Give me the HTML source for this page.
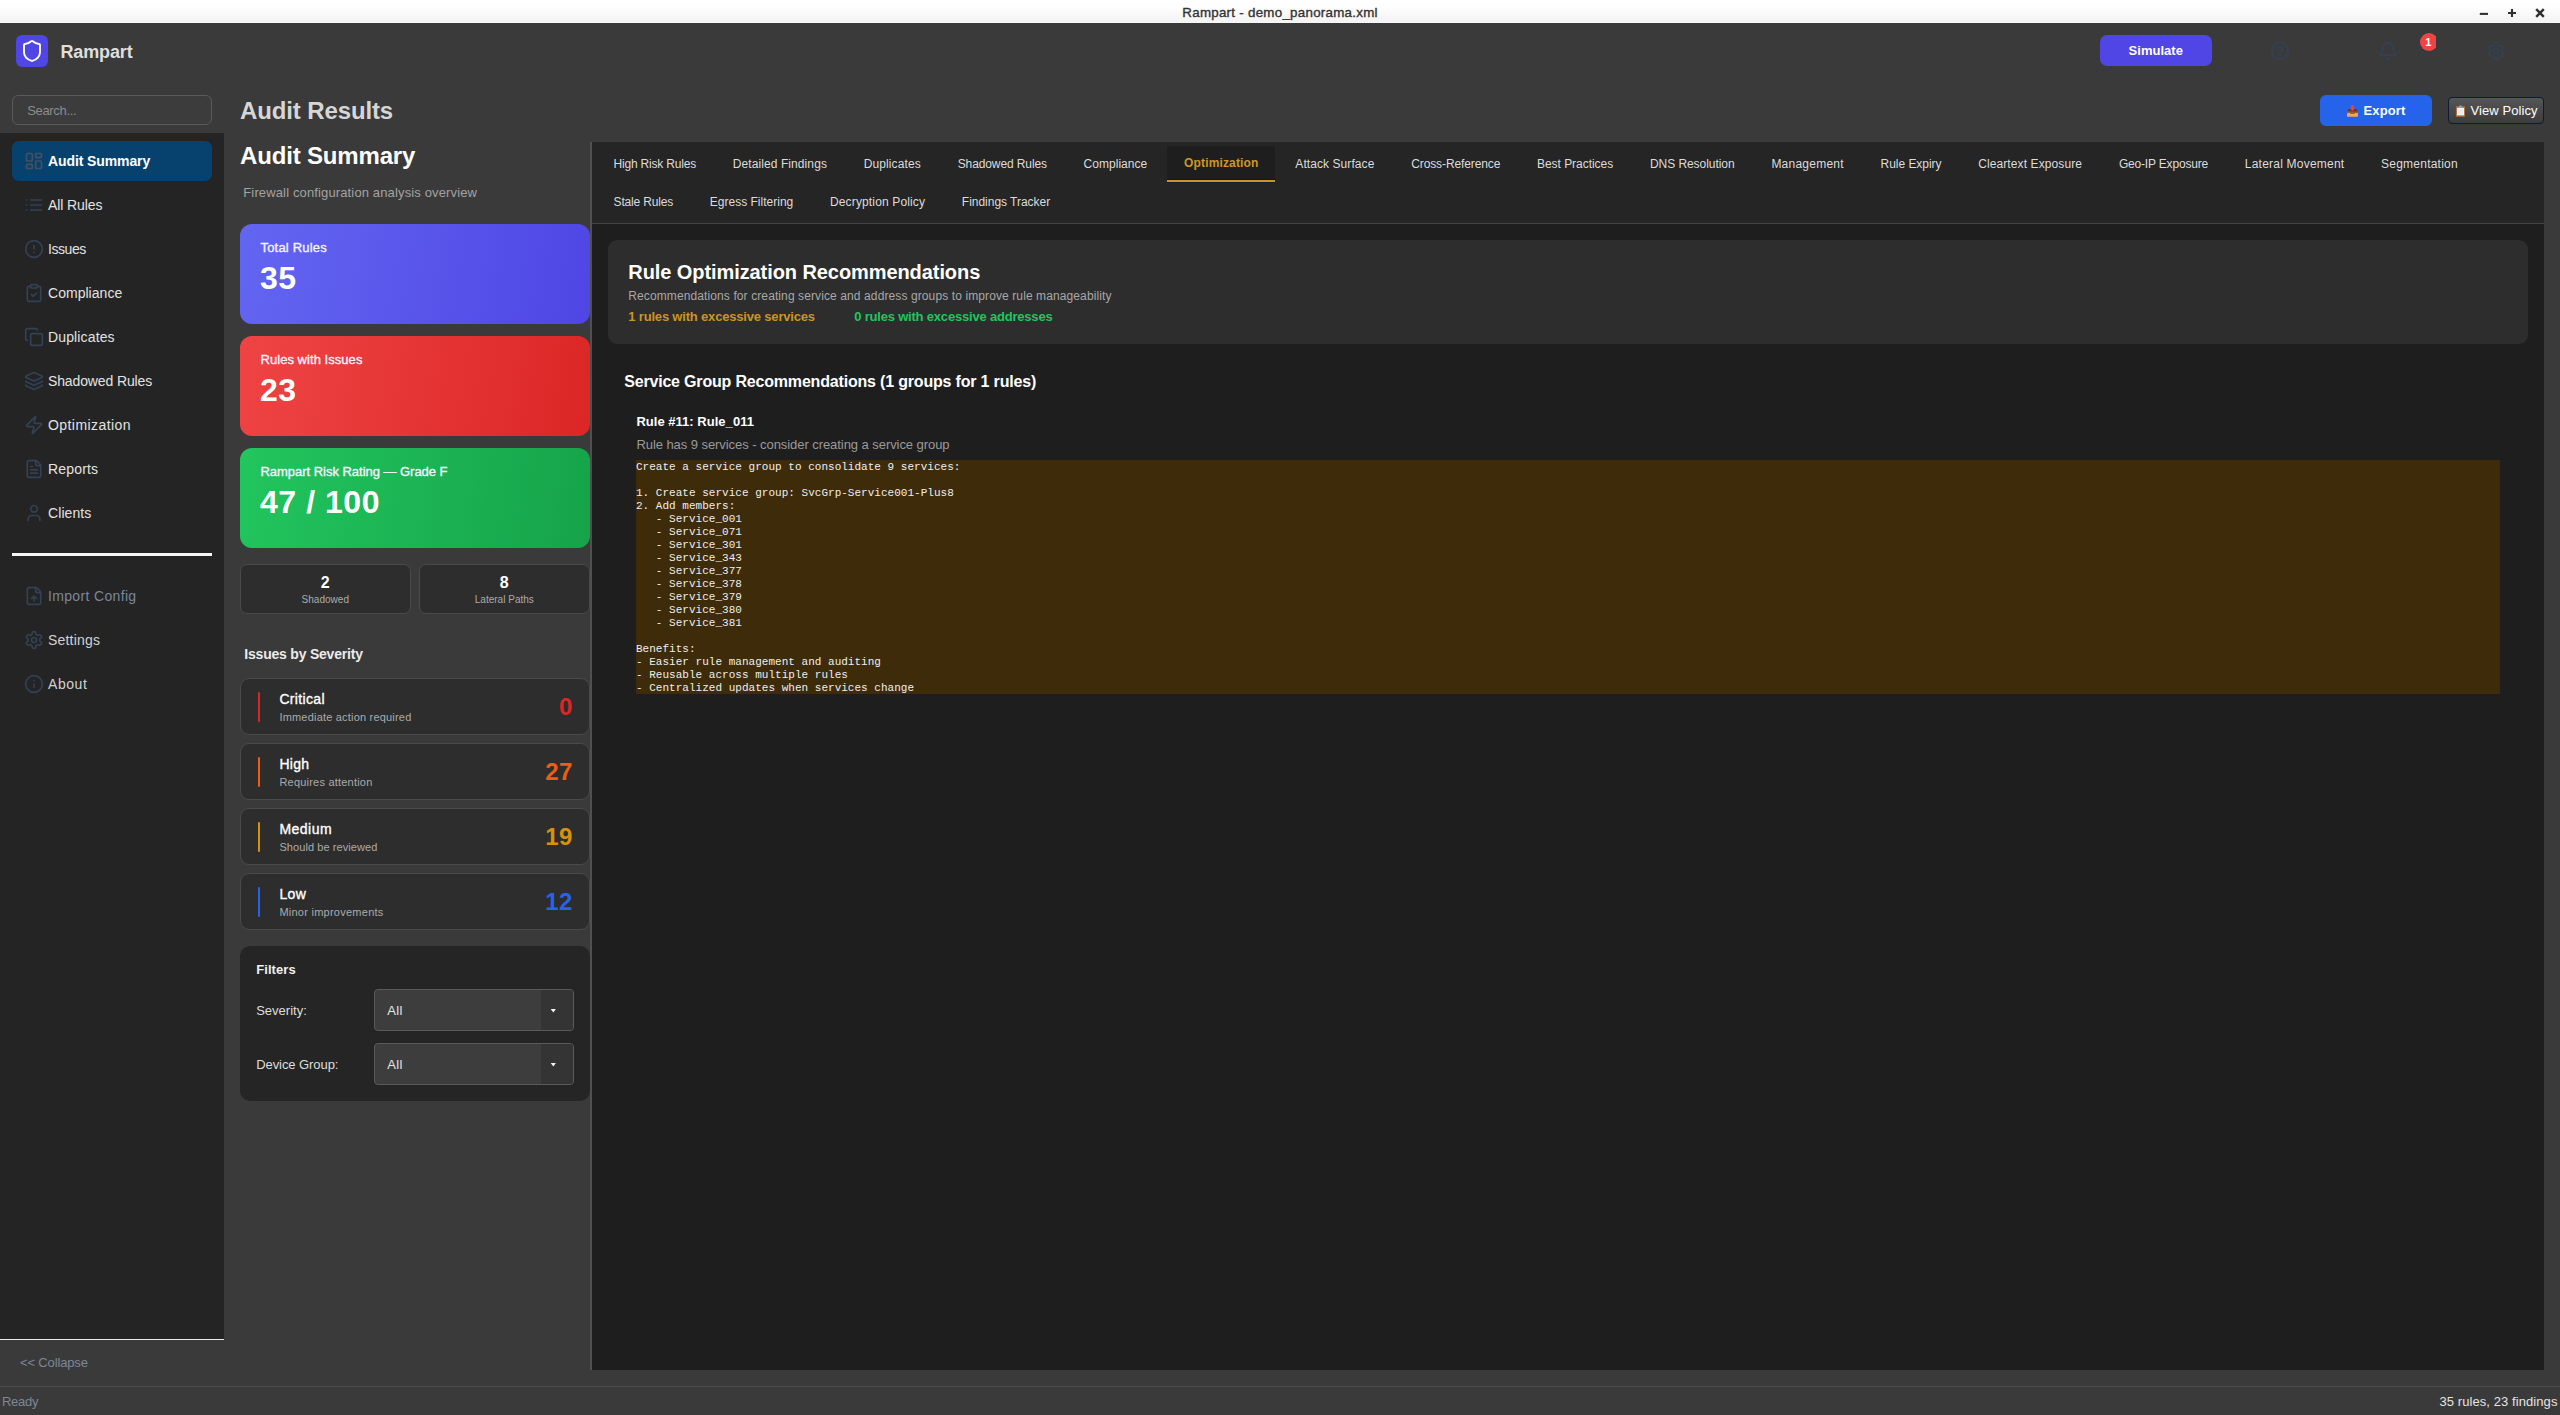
<!DOCTYPE html>
<html>
<head>
<meta charset="utf-8">
<title>Rampart - demo_panorama.xml</title>
<style>
*{box-sizing:border-box;margin:0;padding:0}
html,body{width:2560px;height:1415px;overflow:hidden;background:#3a3a3a}
body{font-family:"Liberation Sans",sans-serif;color:#e0e0e0;position:relative;font-size:13px}
.t{position:absolute;white-space:pre;line-height:1}
pre{position:absolute;font-family:"Liberation Mono",monospace;white-space:pre}
</style>
</head>
<body>
<div id="titlebar" style="position:absolute;left:0px;top:0px;width:2560px;height:23px;background:linear-gradient(#ffffff 0%,#fdfdfd 35%,#f4f4f4 90%,#f8f8f8 100%);"></div>
<svg style="position:absolute;left:2470px;top:3px" width="84" height="20" viewBox="0 0 84 20" fill="none" stroke="#303030" stroke-width="2.1"><path d="M9.8 10.9h8.2"/><path d="M38 10h8M42 6v8"/><path d="M66.2 6.2l7.6 7.6M73.8 6.2l-7.6 7.6" stroke-width="2.4"/></svg>
<div id="logo" style="position:absolute;left:16px;top:35px;width:32px;height:32px;background:#4f46e5;border-radius:6px"></div>
<svg style="position:absolute;left:20px;top:39px" width="24" height="24" viewBox="0 0 24 24" fill="none" stroke="#ffffff" stroke-width="1.9" stroke-linecap="round" stroke-linejoin="round"><path d="M20 13c0 5-3.5 7.5-7.66 8.95a1 1 0 0 1-.67-.01C7.5 20.5 4 18 4 13V6a1 1 0 0 1 1-1c2 0 4.5-1.2 6.24-2.72a1.17 1.17 0 0 1 1.52 0C14.51 3.81 17 5 19 5a1 1 0 0 1 1 1z"/></svg>
<div id="simulate" style="position:absolute;left:2100px;top:35px;width:112px;height:31px;background:#4f46e5;border-radius:7px"></div>
<svg style="position:absolute;left:2270px;top:41px" width="20" height="20" viewBox="0 0 24 24" fill="none" stroke="#334155" stroke-width="2" stroke-linecap="round" stroke-linejoin="round"><circle cx="12" cy="12" r="10"/><path d="M9.09 9a3 3 0 0 1 5.83 1c0 2-3 3-3 3M12 17h.01"/></svg>
<svg style="position:absolute;left:2378px;top:41px" width="20" height="20" viewBox="0 0 24 24" fill="none" stroke="#334155" stroke-width="2" stroke-linecap="round" stroke-linejoin="round"><path d="M10.268 21a2 2 0 0 0 3.464 0"/><path d="M3.262 15.326A1 1 0 0 0 4 17h16a1 1 0 0 0 .74-1.673C19.41 13.956 18 12.499 18 8A6 6 0 0 0 6 8c0 4.499-1.411 5.956-2.738 7.326"/></svg>
<svg style="position:absolute;left:2486px;top:41px" width="20" height="20" viewBox="0 0 24 24" fill="none" stroke="#334155" stroke-width="2" stroke-linecap="round" stroke-linejoin="round"><path d="M12.22 2h-.44a2 2 0 0 0-2 2v.18a2 2 0 0 1-1 1.73l-.43.25a2 2 0 0 1-2 0l-.15-.08a2 2 0 0 0-2.73.73l-.22.38a2 2 0 0 0 .73 2.73l.15.1a2 2 0 0 1 1 1.72v.51a2 2 0 0 1-1 1.74l-.15.09a2 2 0 0 0-.73 2.73l.22.38a2 2 0 0 0 2.73.73l.15-.08a2 2 0 0 1 2 0l.43.25a2 2 0 0 1 1 1.73V20a2 2 0 0 0 2 2h.44a2 2 0 0 0 2-2v-.18a2 2 0 0 1 1-1.73l.43-.25a2 2 0 0 1 2 0l.15.08a2 2 0 0 0 2.73-.73l.22-.39a2 2 0 0 0-.73-2.73l-.15-.08a2 2 0 0 1-1-1.74v-.5a2 2 0 0 1 1-1.74l.15-.09a2 2 0 0 0 .73-2.73l-.22-.38a2 2 0 0 0-2.73-.73l-.15.08a2 2 0 0 1-2 0l-.43-.25a2 2 0 0 1-1-1.73V4a2 2 0 0 0-2-2z"/><circle cx="12" cy="12" r="3"/></svg>
<div id="badge" style="position:absolute;left:2420px;top:33px;width:16px;height:18px;overflow:hidden"><div style="width:18px;height:18px;border-radius:9px;background:#ef4444"></div></div>
<div id="search" style="position:absolute;left:12px;top:95px;width:200px;height:30px;background:#3c3c3c;border:1px solid #5a5a5a;border-radius:6px"></div>
<div id="sidebar" style="position:absolute;left:0px;top:133px;width:224px;height:1206px;background:#242424;"></div>
<div id="sideline" style="position:absolute;left:0px;top:1339px;width:224px;height:1px;background:#ececec;"></div>
<div id="navactive" style="position:absolute;left:12px;top:141px;width:200px;height:40px;background:#07426f;border-radius:7px"></div>
<svg style="position:absolute;left:24px;top:151px" width="20" height="20" viewBox="0 0 24 24" fill="none" stroke="#44505f" stroke-width="2" stroke-linecap="round" stroke-linejoin="round"><rect width="7" height="9" x="3" y="3" rx="1"/><rect width="7" height="5" x="14" y="3" rx="1"/><rect width="7" height="9" x="14" y="12" rx="1"/><rect width="7" height="5" x="3" y="16" rx="1"/></svg>
<svg style="position:absolute;left:24px;top:195px" width="20" height="20" viewBox="0 0 24 24" fill="none" stroke="#334155" stroke-width="2" stroke-linecap="round" stroke-linejoin="round"><path d="M8 6h13M8 12h13M8 18h13M3 6h.01M3 12h.01M3 18h.01"/></svg>
<svg style="position:absolute;left:24px;top:239px" width="20" height="20" viewBox="0 0 24 24" fill="none" stroke="#334155" stroke-width="2" stroke-linecap="round" stroke-linejoin="round"><circle cx="12" cy="12" r="10"/><path d="M12 8v4M12 16h.01"/></svg>
<svg style="position:absolute;left:24px;top:283px" width="20" height="20" viewBox="0 0 24 24" fill="none" stroke="#334155" stroke-width="2" stroke-linecap="round" stroke-linejoin="round"><rect width="8" height="4" x="8" y="2" rx="1"/><path d="M16 4h2a2 2 0 0 1 2 2v14a2 2 0 0 1-2 2H6a2 2 0 0 1-2-2V6a2 2 0 0 1 2-2h2"/><path d="m9 14 2 2 4-4"/></svg>
<svg style="position:absolute;left:24px;top:327px" width="20" height="20" viewBox="0 0 24 24" fill="none" stroke="#334155" stroke-width="2" stroke-linecap="round" stroke-linejoin="round"><rect width="14" height="14" x="8" y="8" rx="2"/><path d="M4 16c-1.1 0-2-.9-2-2V4c0-1.1.9-2 2-2h10c1.1 0 2 .9 2 2"/></svg>
<svg style="position:absolute;left:24px;top:371px" width="20" height="20" viewBox="0 0 24 24" fill="none" stroke="#334155" stroke-width="2" stroke-linecap="round" stroke-linejoin="round"><path d="M12.83 2.18a2 2 0 0 0-1.66 0L2.6 6.08a1 1 0 0 0 0 1.83l8.58 3.91a2 2 0 0 0 1.66 0l8.58-3.9a1 1 0 0 0 0-1.83z"/><path d="M2 12a1 1 0 0 0 .58.91l8.6 3.91a2 2 0 0 0 1.65 0l8.58-3.9A1 1 0 0 0 22 12"/><path d="M2 17a1 1 0 0 0 .58.91l8.6 3.91a2 2 0 0 0 1.65 0l8.58-3.9A1 1 0 0 0 22 17"/></svg>
<svg style="position:absolute;left:24px;top:415px" width="20" height="20" viewBox="0 0 24 24" fill="none" stroke="#334155" stroke-width="2" stroke-linecap="round" stroke-linejoin="round"><path d="M4 14a1 1 0 0 1-.78-1.63l9.9-10.2a.5.5 0 0 1 .86.46l-1.92 6.02A1 1 0 0 0 13 10h7a1 1 0 0 1 .78 1.63l-9.9 10.2a.5.5 0 0 1-.86-.46l1.92-6.02A1 1 0 0 0 11 14z"/></svg>
<svg style="position:absolute;left:24px;top:459px" width="20" height="20" viewBox="0 0 24 24" fill="none" stroke="#334155" stroke-width="2" stroke-linecap="round" stroke-linejoin="round"><path d="M15 2H6a2 2 0 0 0-2 2v16a2 2 0 0 0 2 2h12a2 2 0 0 0 2-2V7z"/><path d="M14 2v4a2 2 0 0 0 2 2h4M10 9H8M16 13H8M16 17H8"/></svg>
<svg style="position:absolute;left:24px;top:503px" width="20" height="20" viewBox="0 0 24 24" fill="none" stroke="#334155" stroke-width="2" stroke-linecap="round" stroke-linejoin="round"><path d="M19 21v-2a4 4 0 0 0-4-4H9a4 4 0 0 0-4 4v2"/><circle cx="12" cy="7" r="4"/></svg>
<div id="navdiv" style="position:absolute;left:12px;top:553px;width:200px;height:3px;background:#f6f6f6;"></div>
<svg style="position:absolute;left:24px;top:586px" width="20" height="20" viewBox="0 0 24 24" fill="none" stroke="#334155" stroke-width="2" stroke-linecap="round" stroke-linejoin="round"><path d="M15 2H6a2 2 0 0 0-2 2v16a2 2 0 0 0 2 2h12a2 2 0 0 0 2-2V7z"/><path d="M14 2v4a2 2 0 0 0 2 2h4M12 12v6M15 15l-3-3-3 3"/></svg>
<svg style="position:absolute;left:24px;top:630px" width="20" height="20" viewBox="0 0 24 24" fill="none" stroke="#334155" stroke-width="2" stroke-linecap="round" stroke-linejoin="round"><path d="M12.22 2h-.44a2 2 0 0 0-2 2v.18a2 2 0 0 1-1 1.73l-.43.25a2 2 0 0 1-2 0l-.15-.08a2 2 0 0 0-2.73.73l-.22.38a2 2 0 0 0 .73 2.73l.15.1a2 2 0 0 1 1 1.72v.51a2 2 0 0 1-1 1.74l-.15.09a2 2 0 0 0-.73 2.73l.22.38a2 2 0 0 0 2.73.73l.15-.08a2 2 0 0 1 2 0l.43.25a2 2 0 0 1 1 1.73V20a2 2 0 0 0 2 2h.44a2 2 0 0 0 2-2v-.18a2 2 0 0 1 1-1.73l.43-.25a2 2 0 0 1 2 0l.15.08a2 2 0 0 0 2.73-.73l.22-.39a2 2 0 0 0-.73-2.73l-.15-.08a2 2 0 0 1-1-1.74v-.5a2 2 0 0 1 1-1.74l.15-.09a2 2 0 0 0 .73-2.73l-.22-.38a2 2 0 0 0-2.73-.73l-.15.08a2 2 0 0 1-2 0l-.43-.25a2 2 0 0 1-1-1.73V4a2 2 0 0 0-2-2z"/><circle cx="12" cy="12" r="3"/></svg>
<svg style="position:absolute;left:24px;top:674px" width="20" height="20" viewBox="0 0 24 24" fill="none" stroke="#334155" stroke-width="2" stroke-linecap="round" stroke-linejoin="round"><circle cx="12" cy="12" r="10"/><path d="M12 16v-4M12 8h.01"/></svg>
<div id="statusline" style="position:absolute;left:0px;top:1386px;width:2560px;height:1px;background:#4d4d4d;"></div>
<div style="position:absolute;left:240px;top:224px;width:350px;height:100px;background:linear-gradient(100deg,#6366f1 0%,#4f46e5 100%);border-radius:12px"></div>
<div style="position:absolute;left:240px;top:336px;width:350px;height:100px;background:linear-gradient(100deg,#ef4444 0%,#dc2626 100%);border-radius:12px"></div>
<div style="position:absolute;left:240px;top:448px;width:350px;height:100px;background:linear-gradient(100deg,#22c55e 0%,#16a34a 100%);border-radius:12px"></div>
<div style="position:absolute;left:240px;top:564px;width:171px;height:50px;background:#2d2d2d;border:1px solid #4a4a4a;border-radius:7px"></div>
<div style="position:absolute;left:419px;top:564px;width:171px;height:50px;background:#2d2d2d;border:1px solid #4a4a4a;border-radius:7px"></div>
<div style="position:absolute;left:240px;top:678px;width:350px;height:56.5px;background:#2d2d2d;border:1px solid #4a4a4a;border-radius:9px"></div>
<div style="position:absolute;left:257.6px;top:691.5px;width:2.7px;height:30px;background:#dc2626;border-radius:1.4px"></div>
<div style="position:absolute;left:240px;top:743px;width:350px;height:56.5px;background:#2d2d2d;border:1px solid #4a4a4a;border-radius:9px"></div>
<div style="position:absolute;left:257.6px;top:756.5px;width:2.7px;height:30px;background:#ee5d10;border-radius:1.4px"></div>
<div style="position:absolute;left:240px;top:808px;width:350px;height:56.5px;background:#2d2d2d;border:1px solid #4a4a4a;border-radius:9px"></div>
<div style="position:absolute;left:257.6px;top:821.5px;width:2.7px;height:30px;background:#d89207;border-radius:1.4px"></div>
<div style="position:absolute;left:240px;top:873px;width:350px;height:56.5px;background:#2d2d2d;border:1px solid #4a4a4a;border-radius:9px"></div>
<div style="position:absolute;left:257.6px;top:886.5px;width:2.7px;height:30px;background:#2563eb;border-radius:1.4px"></div>
<div id="filters" style="position:absolute;left:240px;top:946px;width:350px;height:155px;background:#252525;border-radius:10px"></div>
<div style="position:absolute;left:374px;top:989px;width:200px;height:42px;background:#3d3d3d;border:1px solid #5a5a5a;border-radius:4px;overflow:hidden"></div>
<div style="position:absolute;left:541px;top:990px;width:32px;height:40px;background:#343434;border-radius:0 3px 3px 0"></div>
<svg style="position:absolute;left:550px;top:1008px" width="7" height="5" viewBox="0 0 7 5"><path d="M0.7 0.9h5.2L3.3 4.4z" fill="#f4f4f4"/></svg>
<div style="position:absolute;left:374px;top:1043px;width:200px;height:42px;background:#3d3d3d;border:1px solid #5a5a5a;border-radius:4px;overflow:hidden"></div>
<div style="position:absolute;left:541px;top:1044px;width:32px;height:40px;background:#343434;border-radius:0 3px 3px 0"></div>
<svg style="position:absolute;left:550px;top:1062px" width="7" height="5" viewBox="0 0 7 5"><path d="M0.7 0.9h5.2L3.3 4.4z" fill="#f4f4f4"/></svg>
<div id="right" style="position:absolute;left:590px;top:142px;width:1954px;height:1228px;background:#1e1e1e;"></div>
<div id="rightborder" style="position:absolute;left:590px;top:142px;width:2px;height:1228px;background:#505050;"></div>
<div id="tabbar" style="position:absolute;left:592px;top:142px;width:1952px;height:81px;background:#252525;"></div>
<div id="tabline" style="position:absolute;left:592px;top:223px;width:1952px;height:1px;background:#444444;"></div>
<div id="tabactive" style="position:absolute;left:1167px;top:146px;width:108px;height:34px;background:#1e1e1e;"></div>
<div style="position:absolute;left:1167px;top:179px;width:108px;height:1px;background:#14171e;"></div>
<div style="position:absolute;left:1167px;top:180px;width:108px;height:2px;background:#cc9424;"></div>
<div style="position:absolute;left:1167px;top:182px;width:108px;height:1px;background:#1d2028;"></div>
<div id="hdrcard" style="position:absolute;left:608px;top:240px;width:1920px;height:104px;background:#2d2d2d;border-radius:9px"></div>
<div id="code" style="position:absolute;left:636px;top:460px;width:1864px;height:234px;background:#3d2b0a;"></div>
<div id="export" style="position:absolute;left:2320px;top:95px;width:112px;height:31px;background:#2563eb;border-radius:6px"></div>
<svg style="position:absolute;left:2346px;top:104px" width="14" height="14" viewBox="0 0 14 14"><defs><linearGradient id="tg" x1="0" y1="0" x2="0" y2="1"><stop offset="0" stop-color="#4e2a1c"/><stop offset="1" stop-color="#a8673d"/></linearGradient></defs><path d="M2.2 5.2H10.8L12 9.2H1Z" fill="url(#tg)"/><rect x="1.05" y="9" width="10.9" height="3.8" rx="0.5" fill="#f9a355"/><rect x="4.2" y="8.4" width="4.6" height="1.5" rx="0.4" fill="#a05c32"/><path d="M5.1 1.2H7.9V4.1L8.8 4.7L6.5 7.1L4.2 4.7L5.1 4.1Z" fill="#f4402f"/></svg>
<div id="viewpolicy" style="position:absolute;left:2448px;top:97px;width:96px;height:27px;background:linear-gradient(#565656,#3c3c3c);border:1px solid #0d1b33;border-radius:4px"></div>
<svg style="position:absolute;left:2455px;top:104px" width="11" height="14" viewBox="0 0 11 14"><rect x="0.9" y="2.2" width="9.1" height="10.6" rx="0.8" fill="#b8733c"/><rect x="2" y="3.9" width="7" height="7.4" fill="#f6f6f6"/><rect x="2.9" y="5" width="5.2" height="5.4" fill="#e8ecef"/><path d="M3.1 3.9L5.4 0.8L7.9 3.9Z" fill="#7fa9ba"/></svg>
<span class="t" id="wtitle" style="left:1182.30px;top:6.12px;font-size:13.33px;color:#333333;letter-spacing:0.272px;-webkit-text-stroke:0.35px #333333">Rampart - demo_panorama.xml</span>
<span class="t" id="brand" style="left:60.40px;top:42.76px;font-size:18px;color:#dedede;letter-spacing:-0.119px;font-weight:bold">Rampart</span>
<span class="t" style="left:2128.60px;top:44.20px;font-size:13px;color:#ffffff;letter-spacing:0.026px;font-weight:bold">Simulate</span>
<span class="t" style="left:2425.36px;top:36.79px;font-size:11px;color:#ffffff;letter-spacing:0.156px;font-weight:bold">1</span>
<span class="t" style="left:27.20px;top:103.60px;font-size:13px;color:#8c8c8c;letter-spacing:-0.321px">Search...</span>
<span class="t" style="left:48.00px;top:154.15px;font-size:14px;color:#ffffff;letter-spacing:-0.101px;font-weight:bold">Audit Summary</span>
<span class="t" style="left:48.00px;top:198.15px;font-size:14px;color:#e2e2e2;letter-spacing:-0.096px">All Rules</span>
<span class="t" style="left:48.00px;top:242.15px;font-size:14px;color:#e2e2e2;letter-spacing:-0.424px">Issues</span>
<span class="t" style="left:48.00px;top:286.15px;font-size:14px;color:#e2e2e2;letter-spacing:0.030px">Compliance</span>
<span class="t" style="left:48.00px;top:330.15px;font-size:14px;color:#e2e2e2;letter-spacing:0.138px">Duplicates</span>
<span class="t" style="left:48.00px;top:374.15px;font-size:14px;color:#e2e2e2;letter-spacing:-0.126px">Shadowed Rules</span>
<span class="t" style="left:48.00px;top:418.15px;font-size:14px;color:#e2e2e2;letter-spacing:0.429px">Optimization</span>
<span class="t" style="left:48.00px;top:462.15px;font-size:14px;color:#e2e2e2;letter-spacing:0.165px">Reports</span>
<span class="t" style="left:48.00px;top:506.15px;font-size:14px;color:#e2e2e2;letter-spacing:0.084px">Clients</span>
<span class="t" style="left:48.00px;top:589.15px;font-size:14px;color:#7a879c;letter-spacing:0.341px">Import Config</span>
<span class="t" style="left:48.00px;top:633.15px;font-size:14px;color:#d2d2d2;letter-spacing:0.189px">Settings</span>
<span class="t" style="left:48.00px;top:677.15px;font-size:14px;color:#d2d2d2;letter-spacing:0.556px">About</span>
<span class="t" style="left:20.00px;top:1355.50px;font-size:13px;color:#7d8797;letter-spacing:-0.142px">&lt;&lt; Collapse</span>
<span class="t" style="left:2.00px;top:1394.75px;font-size:13px;color:#7d8797;letter-spacing:-0.281px">Ready</span>
<span class="t" style="left:2439.46px;top:1394.75px;font-size:13px;color:#e4e4e4;letter-spacing:0.080px">35 rules, 23 findings</span>
<span class="t" id="h_results" style="left:240.10px;top:98.88px;font-size:24px;color:#d6d6d6;letter-spacing:-0.136px;font-weight:bold">Audit Results</span>
<span class="t" id="h_summary" style="left:240.10px;top:143.68px;font-size:24px;color:#ffffff;letter-spacing:-0.174px;font-weight:bold">Audit Summary</span>
<span class="t" style="left:243.30px;top:185.70px;font-size:13px;color:#a3a3a3;letter-spacing:0.136px">Firewall configuration analysis overview</span>
<span class="t" style="left:260.50px;top:240.70px;font-size:13px;color:#f3f3ff;letter-spacing:0.189px;-webkit-text-stroke:0.35px #f3f3ff">Total Rules</span>
<span class="t" style="left:260.00px;top:261.91px;font-size:32px;color:#ffffff;letter-spacing:0.438px;font-weight:bold">35</span>
<span class="t" style="left:260.50px;top:352.70px;font-size:13px;color:#f3f3ff;letter-spacing:0.046px;-webkit-text-stroke:0.35px #f3f3ff">Rules with Issues</span>
<span class="t" style="left:260.00px;top:373.91px;font-size:32px;color:#ffffff;letter-spacing:0.438px;font-weight:bold">23</span>
<span class="t" style="left:260.50px;top:464.70px;font-size:13px;color:#f3f3ff;letter-spacing:-0.028px;-webkit-text-stroke:0.35px #f3f3ff">Rampart Risk Rating — Grade F</span>
<span class="t" style="left:260.00px;top:485.91px;font-size:32px;color:#ffffff;letter-spacing:0.549px;font-weight:bold">47 / 100</span>
<span class="t" style="left:320.74px;top:574.86px;font-size:16px;color:#ffffff;letter-spacing:0.215px;font-weight:bold">2</span>
<span class="t" style="left:301.61px;top:594.93px;font-size:10px;color:#ababab;letter-spacing:0.014px">Shadowed</span>
<span class="t" style="left:499.74px;top:574.86px;font-size:16px;color:#ffffff;letter-spacing:0.215px;font-weight:bold">8</span>
<span class="t" style="left:474.75px;top:594.93px;font-size:10px;color:#ababab;letter-spacing:0.013px">Lateral Paths</span>
<span class="t" style="left:244.30px;top:647.15px;font-size:14px;color:#ececec;letter-spacing:-0.210px;font-weight:bold">Issues by Severity</span>
<span class="t" style="left:279.40px;top:691.95px;font-size:14px;color:#ffffff;letter-spacing:0.338px;-webkit-text-stroke:0.35px #ffffff">Critical</span>
<span class="t" style="left:279.40px;top:711.59px;font-size:11px;color:#ababab;letter-spacing:0.197px">Immediate action required</span>
<span class="t" style="left:558.92px;top:695.28px;font-size:24px;color:#dc2626;letter-spacing:0.323px;font-weight:bold">0</span>
<span class="t" style="left:279.40px;top:756.95px;font-size:14px;color:#ffffff;letter-spacing:0.313px;-webkit-text-stroke:0.35px #ffffff">High</span>
<span class="t" style="left:279.40px;top:776.59px;font-size:11px;color:#ababab;letter-spacing:0.212px">Requires attention</span>
<span class="t" style="left:545.25px;top:760.28px;font-size:24px;color:#ee5d10;letter-spacing:0.323px;font-weight:bold">27</span>
<span class="t" style="left:279.40px;top:821.95px;font-size:14px;color:#ffffff;letter-spacing:0.491px;-webkit-text-stroke:0.35px #ffffff">Medium</span>
<span class="t" style="left:279.40px;top:841.59px;font-size:11px;color:#ababab;letter-spacing:0.075px">Should be reviewed</span>
<span class="t" style="left:545.25px;top:825.28px;font-size:24px;color:#d89207;letter-spacing:0.323px;font-weight:bold">19</span>
<span class="t" style="left:279.40px;top:886.95px;font-size:14px;color:#ffffff;letter-spacing:0.364px;-webkit-text-stroke:0.35px #ffffff">Low</span>
<span class="t" style="left:279.40px;top:906.59px;font-size:11px;color:#ababab;letter-spacing:0.253px">Minor improvements</span>
<span class="t" style="left:545.25px;top:890.28px;font-size:24px;color:#2563eb;letter-spacing:0.323px;font-weight:bold">12</span>
<span class="t" style="left:256.20px;top:963.00px;font-size:13px;color:#f0f0f0;letter-spacing:0.087px;font-weight:bold">Filters</span>
<span class="t" style="left:256.20px;top:1004.20px;font-size:13px;color:#dedede;letter-spacing:0.012px">Severity:</span>
<span class="t" style="left:387.20px;top:1004.20px;font-size:13px;color:#e6e6e6;letter-spacing:0.322px">All</span>
<span class="t" style="left:256.20px;top:1058.20px;font-size:13px;color:#dedede;letter-spacing:-0.068px">Device Group:</span>
<span class="t" style="left:387.20px;top:1058.20px;font-size:13px;color:#e6e6e6;letter-spacing:0.322px">All</span>
<span class="t" style="left:613.60px;top:157.84px;font-size:12px;color:#dcdcdc;letter-spacing:-0.202px">High Risk Rules</span>
<span class="t" style="left:732.70px;top:157.84px;font-size:12px;color:#dcdcdc;letter-spacing:0.094px">Detailed Findings</span>
<span class="t" style="left:863.70px;top:157.84px;font-size:12px;color:#dcdcdc;letter-spacing:0.118px">Duplicates</span>
<span class="t" style="left:957.70px;top:157.84px;font-size:12px;color:#dcdcdc;letter-spacing:-0.108px">Shadowed Rules</span>
<span class="t" style="left:1083.60px;top:157.84px;font-size:12px;color:#dcdcdc;letter-spacing:0.026px">Compliance</span>
<span class="t" style="left:1184.00px;top:157.04px;font-size:12px;color:#cf9626;letter-spacing:0.158px;font-weight:bold">Optimization</span>
<span class="t" style="left:1295.30px;top:157.84px;font-size:12px;color:#dcdcdc;letter-spacing:0.078px">Attack Surface</span>
<span class="t" style="left:1411.20px;top:157.84px;font-size:12px;color:#dcdcdc;letter-spacing:-0.105px">Cross-Reference</span>
<span class="t" style="left:1537.00px;top:157.84px;font-size:12px;color:#dcdcdc;letter-spacing:-0.040px">Best Practices</span>
<span class="t" style="left:1649.90px;top:157.84px;font-size:12px;color:#dcdcdc;letter-spacing:-0.046px">DNS Resolution</span>
<span class="t" style="left:1771.40px;top:157.84px;font-size:12px;color:#dcdcdc;letter-spacing:0.237px">Management</span>
<span class="t" style="left:1880.60px;top:157.84px;font-size:12px;color:#dcdcdc;letter-spacing:-0.042px">Rule Expiry</span>
<span class="t" style="left:1978.20px;top:157.84px;font-size:12px;color:#dcdcdc;letter-spacing:0.102px">Cleartext Exposure</span>
<span class="t" style="left:2118.90px;top:157.84px;font-size:12px;color:#dcdcdc;letter-spacing:-0.180px">Geo-IP Exposure</span>
<span class="t" style="left:2244.80px;top:157.84px;font-size:12px;color:#dcdcdc;letter-spacing:0.224px">Lateral Movement</span>
<span class="t" style="left:2381.10px;top:157.84px;font-size:12px;color:#dcdcdc;letter-spacing:0.226px">Segmentation</span>
<span class="t" style="left:613.60px;top:195.84px;font-size:12px;color:#dcdcdc;letter-spacing:-0.170px">Stale Rules</span>
<span class="t" style="left:709.85px;top:195.84px;font-size:12px;color:#dcdcdc;letter-spacing:0.002px">Egress Filtering</span>
<span class="t" style="left:830.00px;top:195.84px;font-size:12px;color:#dcdcdc;letter-spacing:0.141px">Decryption Policy</span>
<span class="t" style="left:961.85px;top:195.84px;font-size:12px;color:#dcdcdc;letter-spacing:-0.025px">Findings Tracker</span>
<span class="t" style="left:628.30px;top:261.57px;font-size:20px;color:#ffffff;letter-spacing:-0.079px;font-weight:bold">Rule Optimization Recommendations</span>
<span class="t" style="left:628.30px;top:290.24px;font-size:12px;color:#a8a8a8;letter-spacing:0.106px">Recommendations for creating service and address groups to improve rule manageability</span>
<span class="t" style="left:628.30px;top:309.70px;font-size:13px;color:#cc9424;letter-spacing:-0.183px;font-weight:bold">1 rules with excessive services</span>
<span class="t" style="left:854.20px;top:309.70px;font-size:13px;color:#22c55e;letter-spacing:-0.195px;font-weight:bold">0 rules with excessive addresses</span>
<span class="t" style="left:624.20px;top:373.86px;font-size:16px;color:#ffffff;letter-spacing:-0.184px;font-weight:bold">Service Group Recommendations (1 groups for 1 rules)</span>
<span class="t" style="left:636.40px;top:414.80px;font-size:13px;color:#ffffff;letter-spacing:0.026px;font-weight:bold">Rule #11: Rule_011</span>
<span class="t" style="left:636.40px;top:437.70px;font-size:13px;color:#9a9a9a;letter-spacing:-0.061px">Rule has 9 services - consider creating a service group</span>
<span class="t" style="left:2363.50px;top:103.60px;font-size:13px;color:#ffffff;letter-spacing:0.137px;font-weight:bold">Export</span>
<span class="t" style="left:2470.60px;top:103.60px;font-size:13px;color:#ffffff;letter-spacing:0.069px">View Policy</span>
<pre id="codetxt" style="left:636px;top:460.6px;font-size:11px;line-height:13px;color:#efefef;letter-spacing:0.02px">Create a service group to consolidate 9 services:

1. Create service group: SvcGrp-Service001-Plus8
2. Add members:
   - Service_001
   - Service_071
   - Service_301
   - Service_343
   - Service_377
   - Service_378
   - Service_379
   - Service_380
   - Service_381

Benefits:
- Easier rule management and auditing
- Reusable across multiple rules
- Centralized updates when services change</pre>
</body>
</html>
